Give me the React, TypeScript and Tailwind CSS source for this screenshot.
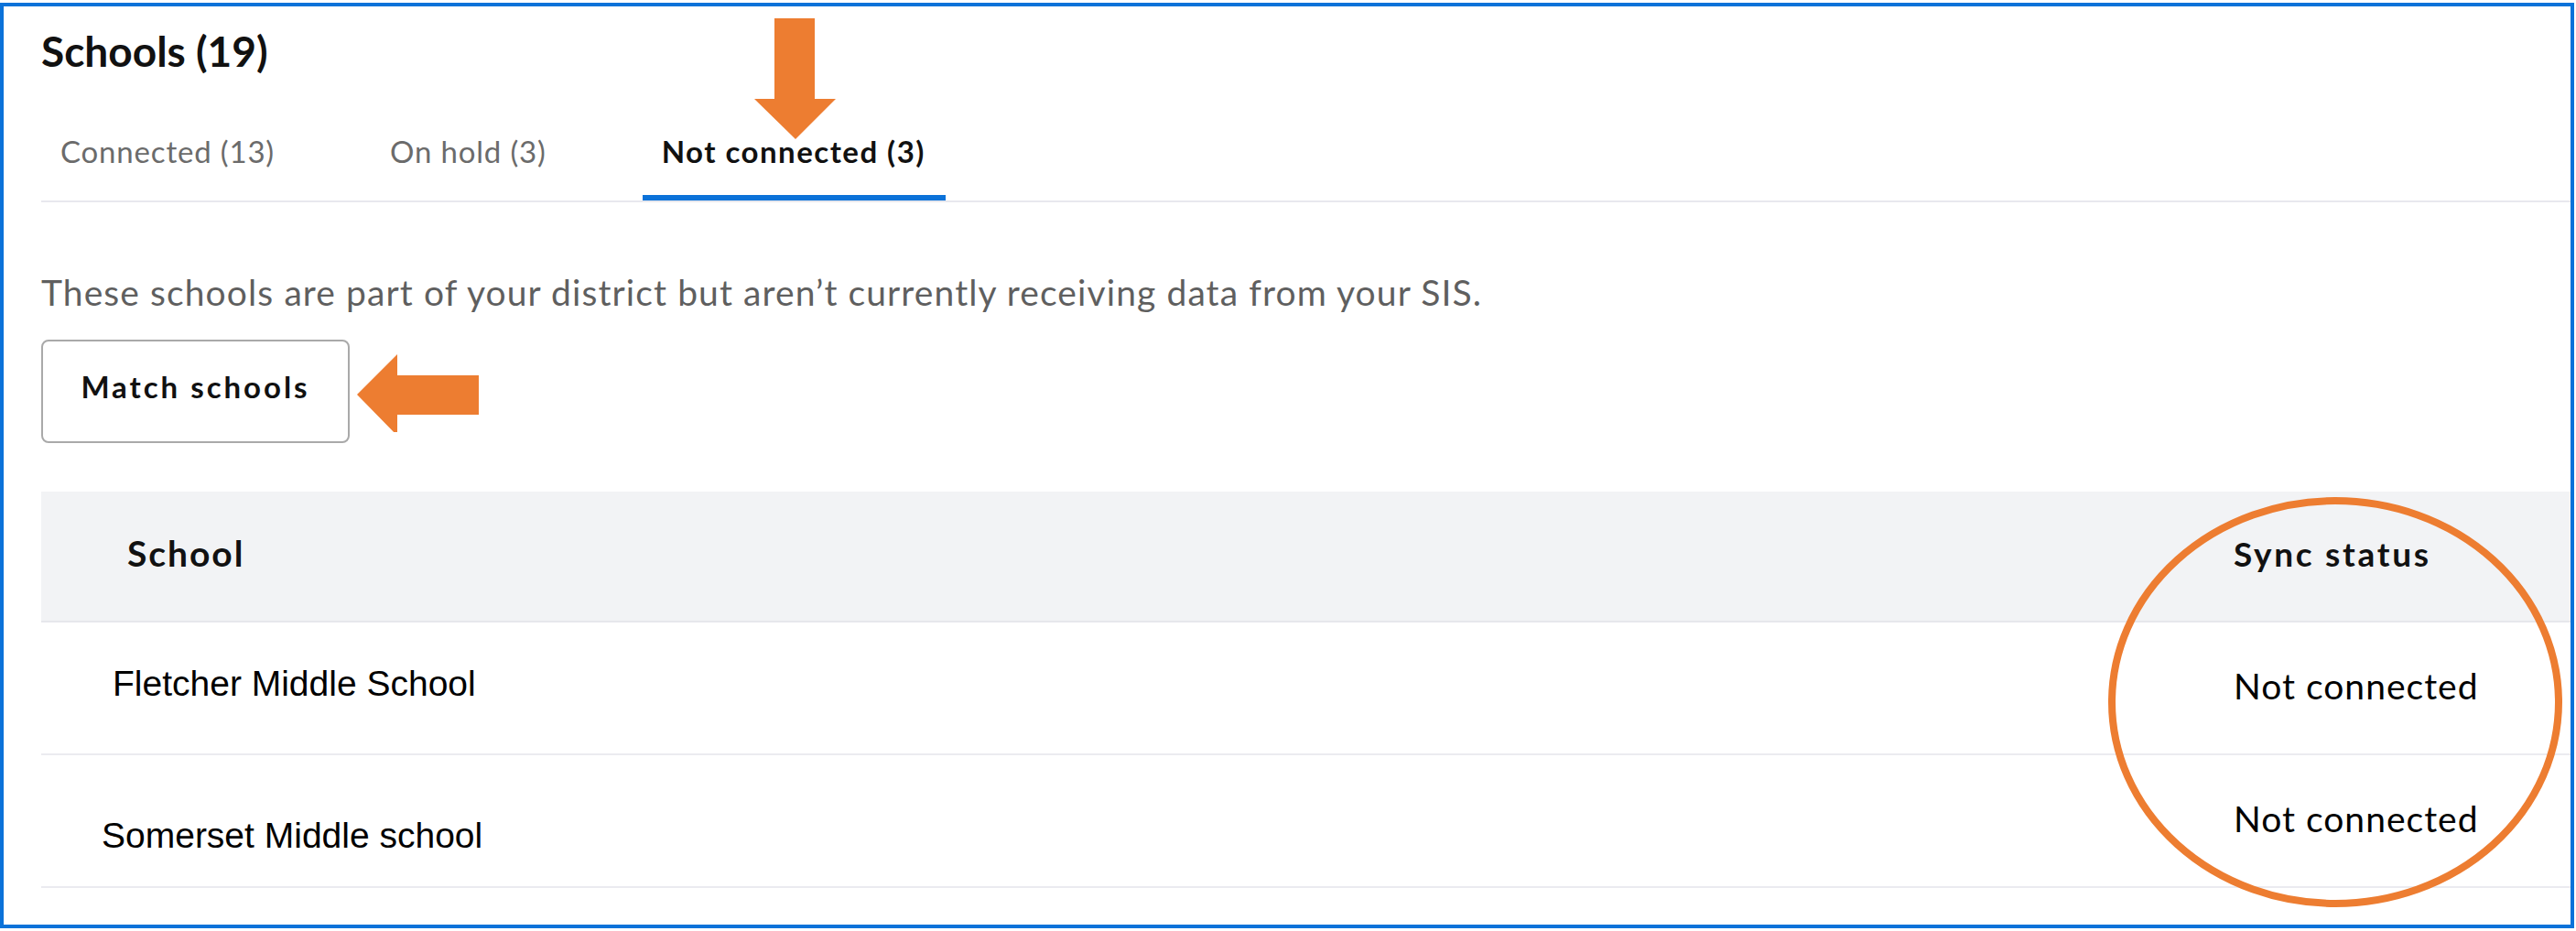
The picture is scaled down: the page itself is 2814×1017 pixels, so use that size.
import React from "react";

const ORANGE = "#ed7d31";

type Tab = { label: string; active?: boolean };

const tabs: Tab[] = [
  { label: "Connected (13)" },
  { label: "On hold (3)" },
  { label: "Not connected (3)", active: true },
];

type Row = { school: string; schoolPad: string; statusPad: string };

const rows: Row[] = [
  { school: "Fletcher Middle School", schoolPad: "pl-[78px] pt-[44px]", statusPad: "pt-[46px]" },
  { school: "Somerset Middle school", schoolPad: "pl-[66px] pt-[65px]", statusPad: "pt-[46px]" },
];

// Annotation arrow pointing down at the active tab
function DownArrow() {
  return (
    <svg className="absolute left-[816px] top-[13px]" width="97" height="145" viewBox="0 0 97 145">
      <polygon points="26,0 70,0 70,88 93,88 49,132 4,88 26,88" fill={ORANGE} />
    </svg>
  );
}

// Annotation arrow pointing left at the button
function LeftArrow() {
  return (
    <svg className="absolute left-[382px] top-[373px]" width="140" height="92" viewBox="0 0 140 92">
      <polygon points="4,51 48,7 48,30 137,30 137,73 48,73 48,96" fill={ORANGE} />
    </svg>
  );
}

// Circle drawn around the sync status column
function StatusEllipse() {
  return (
    <svg className="absolute left-[2294px] top-[529px]" width="505" height="460" viewBox="0 0 505 460">
      <ellipse cx="253" cy="231" rx="244" ry="220" fill="none" stroke={ORANGE} strokeWidth="8" />
    </svg>
  );
}

export default function App() {
  return (
    <div className="w-[2814px] h-[1017px] bg-white pt-[3px] pr-[2px] pb-[3px] font-['Lato',sans-serif]">
      <div className="relative h-full border-4 border-[#0b72d9] bg-white">
        <h1 className="ml-[41px] mt-[21px] text-[46px] leading-[55px] font-bold text-[#111]">Schools (19)</h1>

        <div className="ml-[41px] mt-[63px] flex gap-[83px] border-b-2 border-[#e8e8ee]">
          {tabs.map((t) => (
            <div
              key={t.label}
              className={`pl-[21px] pr-[22px] pb-[29px] border-b-[6px] text-[33px] leading-[38px] ${
                t.active
                  ? "border-[#0b72d9] font-bold tracking-[0.045em] text-[#111]"
                  : "border-transparent tracking-[0.025em] text-[#6b6b6b]"
              }`}
            >
              {t.label}
            </div>
          ))}
        </div>

        <p className="ml-[41px] mt-[75px] text-[39px] leading-[47px] tracking-[0.028em] text-[#5f5f5f]">
          These schools are part of your district but aren’t currently receiving data from your SIS.
        </p>

        <button className="ml-[41px] mt-[28px] w-[337px] h-[113px] flex items-center justify-center pb-[12px] rounded-[8px] border-2 border-[#a9a9a9] bg-white text-[33px] leading-[38px] font-bold tracking-[0.09em] text-[#111]">
          Match schools
        </button>

        <div className="ml-[41px] mt-[53px]">
          <div className="grid grid-cols-[1fr_368px] h-[143px] bg-[#f2f3f5] border-b-2 border-[#e6e7ec]">
            <div className="pl-[94px] pt-[45px] text-[39px] leading-[44px] font-bold tracking-[0.05em] text-[#111]">
              School
            </div>
            <div className="pt-[46px] text-[37px] leading-[44px] font-bold tracking-[0.073em] text-[#111]">
              Sync status
            </div>
          </div>
          {rows.map((r) => (
            <div key={r.school} className="grid grid-cols-[1fr_368px] h-[145px] border-b-2 border-[#ebebf0]">
              <div className={`${r.schoolPad} font-['Liberation_Sans',Arial,sans-serif] text-[39px] leading-[45px] text-black`}>
                {r.school}
              </div>
              <div className={`${r.statusPad} text-[39px] leading-[46px] tracking-[0.026em] text-black`}>
                Not connected
              </div>
            </div>
          ))}
        </div>

        <DownArrow />
        <LeftArrow />
        <StatusEllipse />
      </div>
    </div>
  );
}
